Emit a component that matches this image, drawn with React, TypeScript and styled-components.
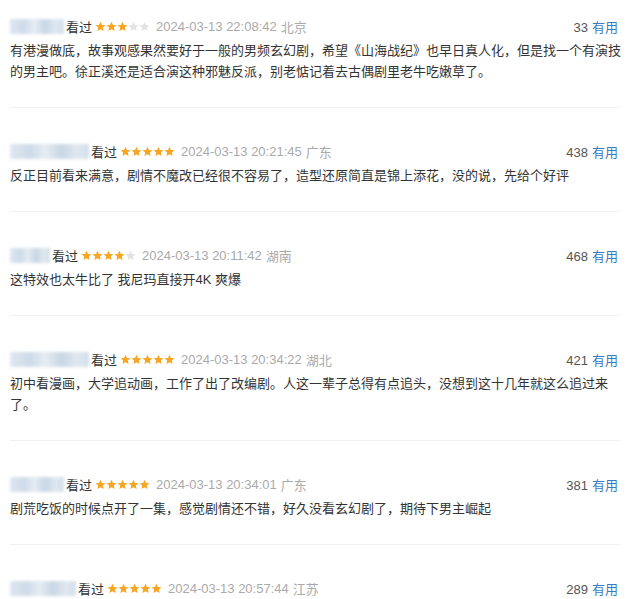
import styled, { createGlobalStyle } from "styled-components";

type Review = {
  nameWidth: number;
  stars: number;
  time: string;
  place: string;
  useful: number;
  text: string;
};

const reviews: Review[] = [
  {
    nameWidth: 54,
    stars: 3,
    time: "2024-03-13 22:08:42",
    place: "北京",
    useful: 33,
    text: "有港漫做底，故事观感果然要好于一般的男频玄幻剧，希望《山海战纪》也早日真人化，但是找一个有演技的男主吧。徐正溪还是适合演这种邪魅反派，别老惦记着去古偶剧里老牛吃嫩草了。",
  },
  {
    nameWidth: 79,
    stars: 5,
    time: "2024-03-13 20:21:45",
    place: "广东",
    useful: 438,
    text: "反正目前看来满意，剧情不魔改已经很不容易了，造型还原简直是锦上添花，没的说，先给个好评",
  },
  {
    nameWidth: 40,
    stars: 4,
    time: "2024-03-13 20:11:42",
    place: "湖南",
    useful: 468,
    text: "这特效也太牛比了 我尼玛直接开4K 爽爆",
  },
  {
    nameWidth: 79,
    stars: 5,
    time: "2024-03-13 20:34:22",
    place: "湖北",
    useful: 421,
    text: "初中看漫画，大学追动画，工作了出了改编剧。人这一辈子总得有点追头，没想到这十几年就这么追过来了。",
  },
  {
    nameWidth: 54,
    stars: 5,
    time: "2024-03-13 20:34:01",
    place: "广东",
    useful: 381,
    text: "剧荒吃饭的时候点开了一集，感觉剧情还不错，好久没看玄幻剧了，期待下男主崛起",
  },
  {
    nameWidth: 66,
    stars: 5,
    time: "2024-03-13 20:57:44",
    place: "江苏",
    useful: 289,
    text: "",
  },
];

const GlobalStyle = createGlobalStyle`
  html, body {
    margin: 0;
    padding: 0;
    background: #fff;
    overflow: hidden;
  }
  body {
    font-family: "Liberation Sans", "Noto Sans CJK SC", sans-serif;
    font-size: 13px;
    color: #333;
  }
`;

const List = styled.div`
  width: 610px;
  margin: 0 10px;
  padding-top: 16px;
`;

const Item = styled.div`
  padding-bottom: 25px;
  margin-bottom: 33px;
  border-bottom: 1px solid #f0f0f0;
`;

const Header = styled.div`
  display: flex;
  align-items: center;
  height: 20px;
  padding-right: 2px;
`;

const NameBlur = styled.div<{ $w: number }>`
  width: ${(p) => p.$w}px;
  height: 15px;
  margin-right: 2px;
  background: linear-gradient(
    90deg,
    #dbe5ef 0%,
    #c9d7e6 25%,
    #e2eaf2 45%,
    #c3d2e2 65%,
    #dde6ef 85%,
    #cfdbe8 100%
  );
  filter: blur(1.4px);
  opacity: 0.9;
`;

const Watched = styled.span`
  color: #333;
  margin-right: 3px;
`;

const Stars = styled.span`
  display: inline-flex;
  margin-right: 6px;
`;

const Meta = styled.span`
  color: #aaa;
  white-space: nowrap;
`;

const Place = styled(Meta)`
  margin-left: 4px;
`;

const Votes = styled.span`
  margin-left: auto;
  color: #555;
`;

const Useful = styled.span`
  margin-left: 4px;
  color: #3a7bbf;
`;

const Comment = styled.p`
  margin: 4px 0 0;
  width: 614px;
  line-height: 21px;
  color: #333;
`;

function Star({ on }: { on: boolean }) {
  return (
    <svg width="11" height="11" viewBox="0 0 24 24">
      <path
        d="M12 1.5l3.2 7 7.6.8-5.7 5.1 1.6 7.5L12 18l-6.7 3.9 1.6-7.5L1.2 9.3l7.6-.8z"
        fill={on ? "#f6a623" : "#e3e3e3"}
      />
    </svg>
  );
}

export default function App() {
  return (
    <>
      <GlobalStyle />
      <List>
        {reviews.map((r, i) => (
          <Item key={i}>
            <Header>
              <NameBlur $w={r.nameWidth} />
              <Watched>看过</Watched>
              <Stars>
                {[0, 1, 2, 3, 4].map((n) => (
                  <Star key={n} on={n < r.stars} />
                ))}
              </Stars>
              <Meta>{r.time}</Meta>
              <Place>{r.place}</Place>
              <Votes>
                {r.useful}
                <Useful>有用</Useful>
              </Votes>
            </Header>
            {r.text && <Comment>{r.text}</Comment>}
          </Item>
        ))}
      </List>
    </>
  );
}
